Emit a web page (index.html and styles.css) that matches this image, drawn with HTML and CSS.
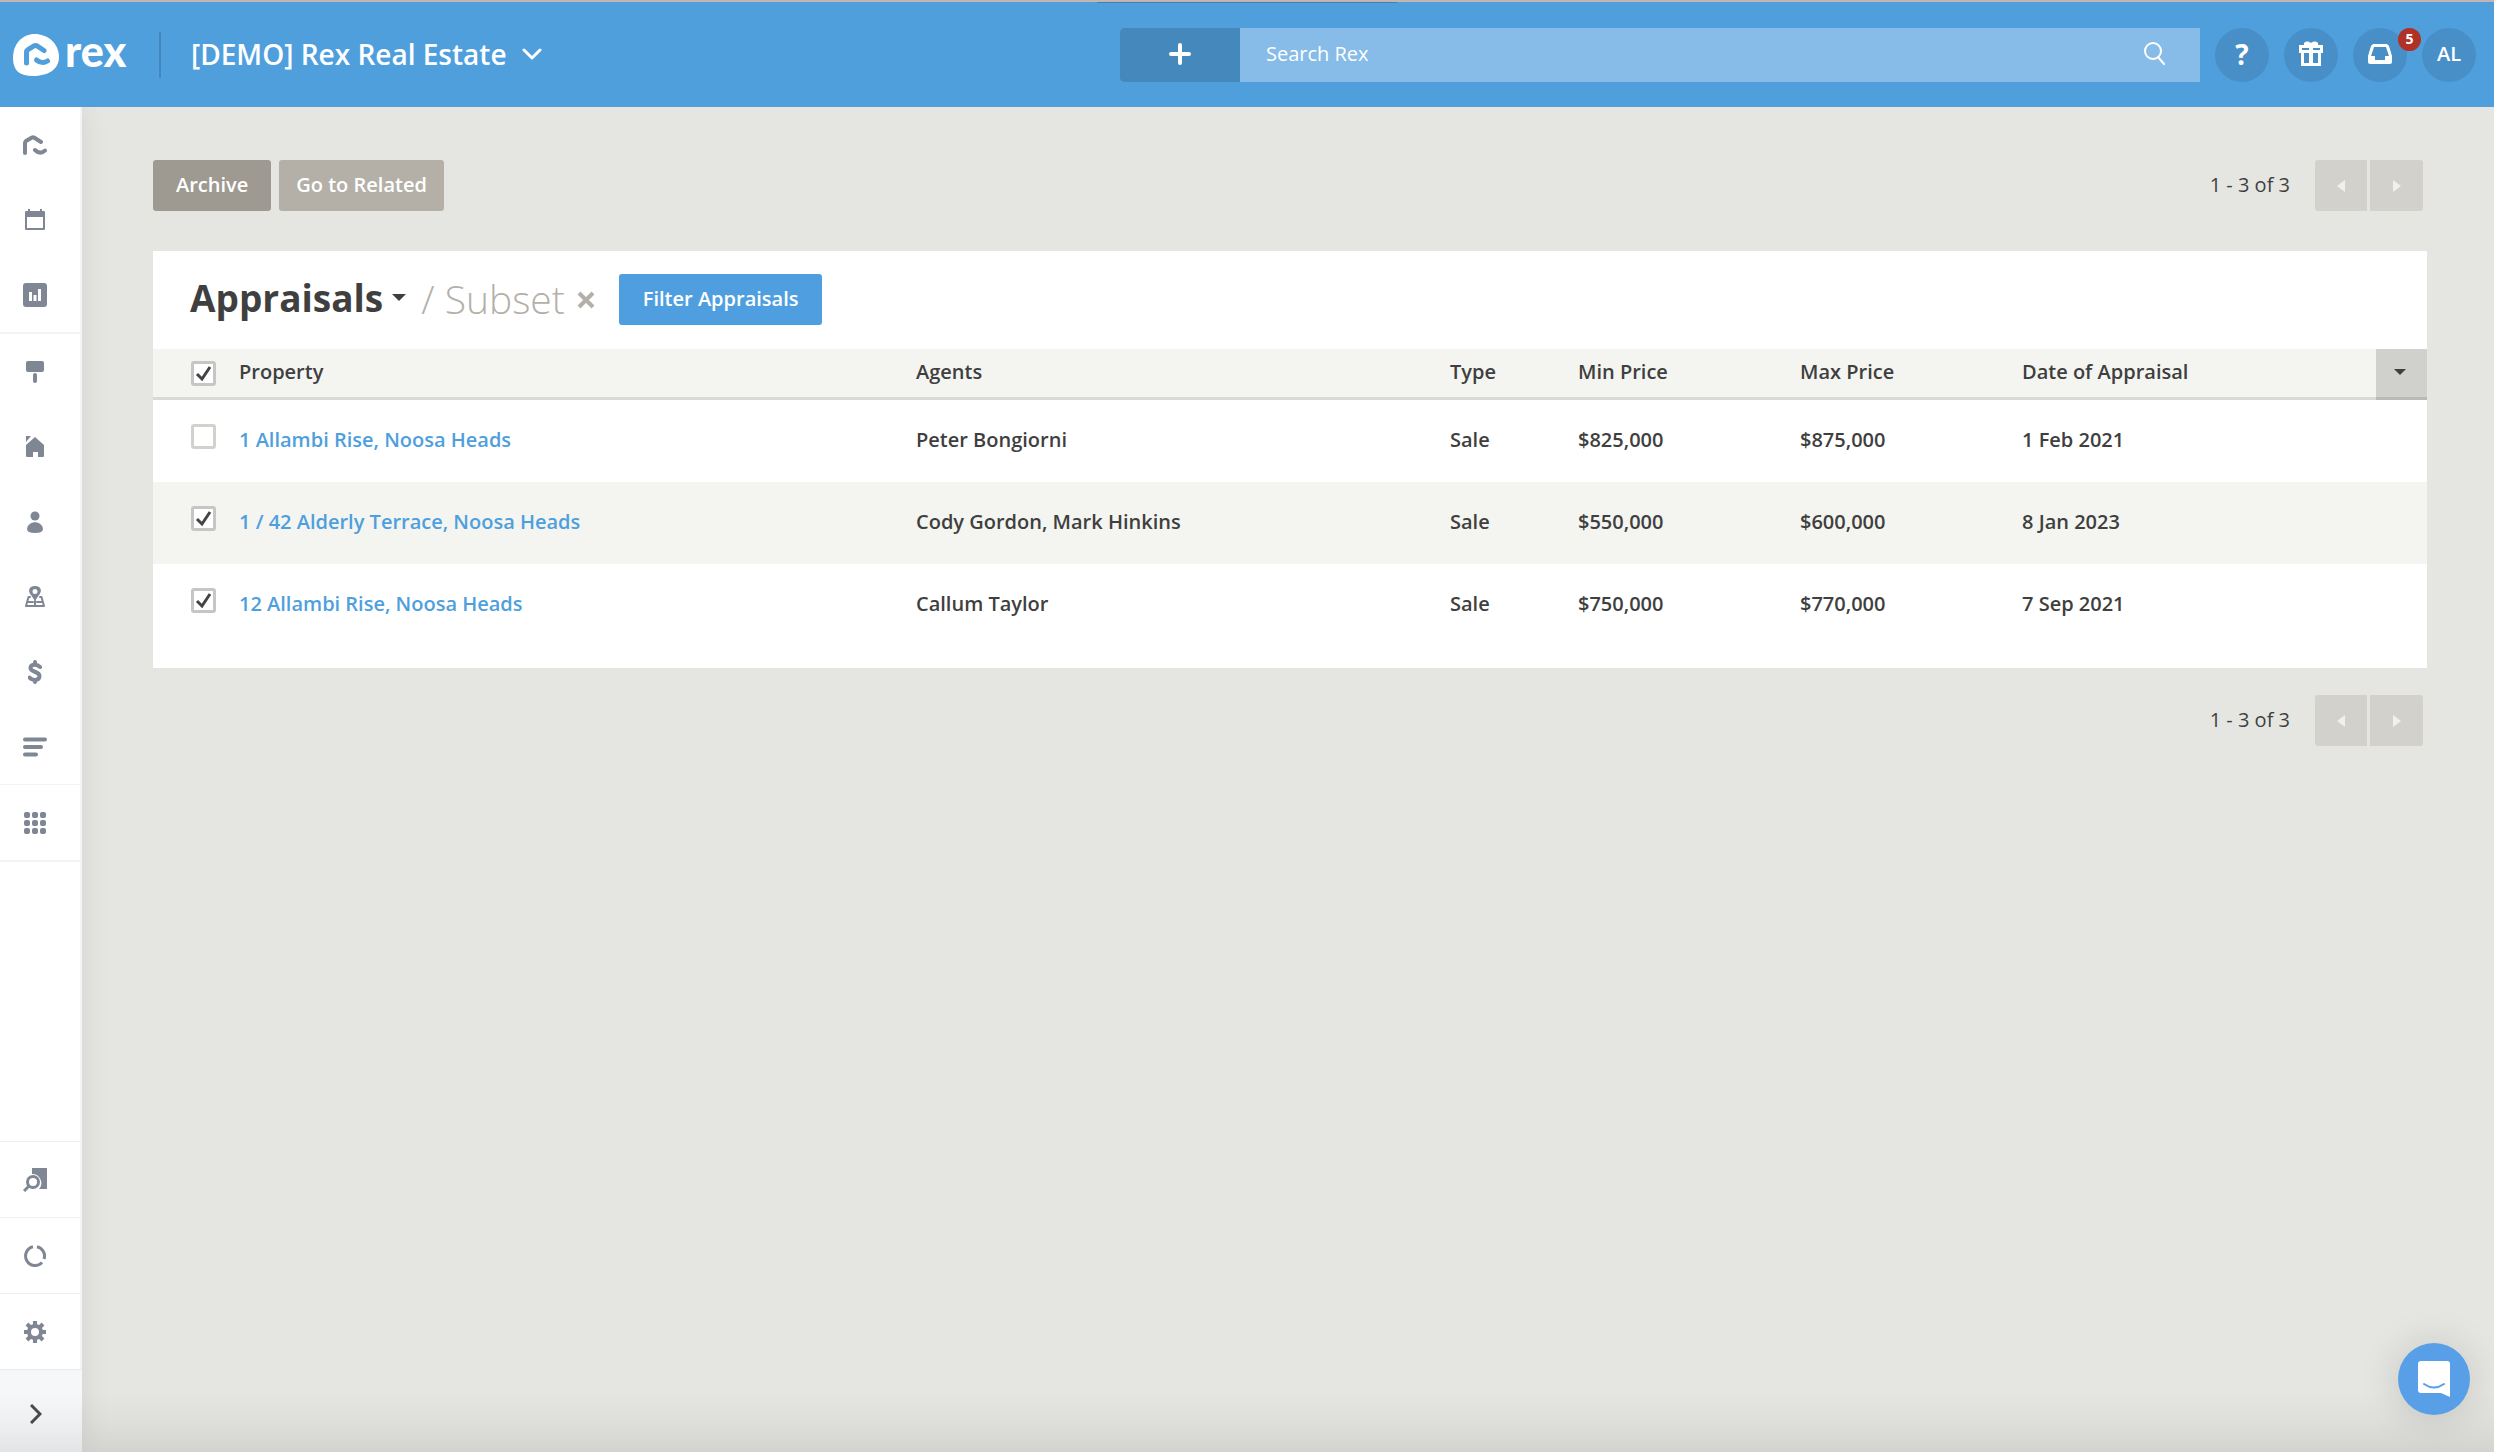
FILE: index.html
```
<!DOCTYPE html>
<html lang="en">
<head>
  <meta charset="UTF-8">
  <title>Appraisals - Rex</title>
  <link rel="stylesheet" href="styles.css">
</head>
<body>
<!-- Top bar -->
<header class="topbar">
  <div class="loading-bar"></div>
  <a class="logo" href="#" aria-label="Rex home">
    <svg width="46" height="42" viewBox="0 0 46 42">
      <path fill="#fff" d="M22 0C34 0 46 9 46 23c0 13-12 19-26 19C7 42 0 37 0 24 0 10 9 0 22 0z"/>
      <path class="logo-line" d="M13.500 29V18.500Q13.500 16.500 15 15.500L21 11.800Q22.500 11 24 11.800L31 16.500M23.500 26Q29 30.500 34.500 27"/>
    </svg>
    <span>rex</span>
  </a>
  <button class="account" type="button">
    [DEMO] Rex Real Estate
    <svg width="20" height="12" viewBox="0 0 20 12"><path d="M2 2l8 8 8-8"/></svg>
  </button>

  <form class="search">
    <button class="add" type="button" aria-label="Add">
      <svg width="22" height="22" viewBox="0 0 22 22"><path d="M11 2v18M2 11h18"/></svg>
    </button>
    <input type="search" placeholder="Search Rex" aria-label="Search Rex">
    <button class="find" type="submit" aria-label="Search">
      <svg width="22" height="23" viewBox="0 0 22 23"><circle cx="9" cy="9" r="8"/><path d="M14 15l6 7"/></svg>
    </button>
  </form>

  <div class="tools">
    <button class="round help" type="button">?</button>
    <button class="round" type="button" aria-label="What's new">
      <svg width="26" height="26" viewBox="0 0 26 26">
        <path fill="#fff" fill-rule="evenodd" d="M1 4h5C5 1 9-1 13 2c4-3 8-1 7 2h5v8h-2v13H3V12H1zM4 7v2h7V7zm11 0v2h7V7zM6 12v3h5v-3zm9 0v3h5v-3zM6 15v7h5v-7zm9 0v7h5v-7z"/>
      </svg>
    </button>
    <button class="round" type="button" aria-label="Inbox, 5 unread">
      <svg width="24" height="20" viewBox="0 0 24 20">
        <path fill="#fff" fill-rule="evenodd" d="M5 0h14l2 2 3 10v6q0 2-2 2H2q-2 0-2-2v-6L3 2zm1 3L3 12h4v4h10v-4h4l-3-9z"/>
      </svg>
      <span class="badge">5</span>
    </button>
    <button class="round" type="button">AL</button>
  </div>
</header>

<div class="page">
  <!-- Side navigation -->
  <nav class="sidebar">
    <div class="nav-group">
      <a href="#" aria-label="Home"><svg width="24" height="20" viewBox="0 0 24 20"><path class="line" d="M2 18V8q0-1 1-2l6-3.500q1-.5 2 0L18 7M12 15q5 5 10 .5"/></svg></a>
      <a href="#" aria-label="Calendar"><svg width="22" height="22" viewBox="0 0 22 22"><path fill-rule="evenodd" d="M4 0h2v2h10V0h2v2h2q1 0 1 1v17q0 1-1 1H2q-1 0-1-1V3q0-1 1-1h2zM3 8v11h16V8z"/></svg></a>
      <a href="#" aria-label="Reports"><svg width="24" height="24" viewBox="0 0 24 24"><path fill-rule="evenodd" d="M3 0h18q3 0 3 3v18q0 3-3 3H3q-3 0-3-3V3q0-3 3-3zM6 9v9h3V9zm4.500 3v6h3v-6zM15 6v12h3V6z"/></svg></a>
    </div>
    <div class="nav-group nav-records">
      <a href="#" aria-label="Listings"><svg width="18" height="22" viewBox="0 0 18 22"><rect width="18" height="11" rx="2"/><rect x="7" y="12" width="4" height="10" rx="2"/></svg></a>
      <a href="#" aria-label="Properties"><svg width="20" height="22" viewBox="0 0 20 22"><path d="M1 0h5L1 6zM10 1l9 8v11q0 1-1 1h-5v-5H8v5H2q-1 0-1-1V9z"/></svg></a>
      <a href="#" aria-label="Contacts"><svg width="18" height="22" viewBox="0 0 18 22"><circle cx="9" cy="5" r="4.500"/><path d="M1 18C2 9 16 9 17 18q0 4-8 4t-8-4z"/></svg></a>
      <a href="#" aria-label="Projects"><svg width="20" height="22" viewBox="0 0 20 22"><path fill-rule="evenodd" d="M10 0c7 0 7 6 4 9l-4 6-4-6C3 6 3 0 10 0zm0 3a2 2 0 1 0 0 5 2 2 0 0 0 0-5z"/><path class="thin" d="M5 11H3.500L1 20h18l-2.500-9H15M2.500 16H8m4 0h5.500M10 15v5"/></svg></a>
      <a href="#" aria-label="Sales"><svg width="14" height="24" viewBox="0 0 14 24"><path class="line" d="M12 7C9 3.500 2.500 4 2.500 8c0 4.500 9 3 9 8 0 5-7 5-10 1.500M7 2v2M7 20v2"/></svg></a>
      <a href="#" aria-label="Lists"><svg width="24" height="20" viewBox="0 0 24 20"><path class="line" d="M2 2.500h20M2 10h16M2 17.500h11"/></svg></a>
    </div>
    <div class="nav-group">
      <a href="#" aria-label="Apps"><svg width="22" height="22" viewBox="0 0 22 22"><rect x="0" y="0" width="6" height="6" rx="2"/><rect x="8" y="0" width="6" height="6" rx="2"/><rect x="16" y="0" width="6" height="6" rx="2"/><rect x="0" y="8" width="6" height="6" rx="2"/><rect x="8" y="8" width="6" height="6" rx="2"/><rect x="16" y="8" width="6" height="6" rx="2"/><rect x="0" y="16" width="6" height="6" rx="2"/><rect x="8" y="16" width="6" height="6" rx="2"/><rect x="16" y="16" width="6" height="6" rx="2"/></svg></a>
    </div>
    <div class="nav-bottom">
      <a href="#" aria-label="Match"><svg width="24" height="24" viewBox="0 0 24 24"><path d="M9 0h15v21h-8a9 9 0 0 0-7-15z"/><circle class="ring" cx="10" cy="14" r="5.500"/><path class="ring" d="M6 18l-5 5"/></svg></a>
      <a href="#" aria-label="Activity"><svg width="22" height="22" viewBox="0 0 22 22"><path class="ring" d="M9 1.700A9.500 9.500 0 1 0 18 17.500M13 1.700A9.500 9.500 0 0 1 20 14"/></svg></a>
      <a href="#" aria-label="Settings"><svg width="22" height="22" viewBox="-11 -11 22 22"><circle class="teeth" r="6"/><path class="teeth" d="M0-7v-4M0 7v4M7 0h4M-7 0h-4M5 5l3 3M-5-5l-3-3M5-5l3-3M-5 5l-3 3"/></svg></a>
      <button class="expand" type="button" aria-label="Expand menu"><svg width="12" height="20" viewBox="0 0 12 20"><path d="M1 1l9 9-9 9"/></svg></button>
    </div>
  </nav>

  <main class="content">
    <div class="actions">
      <button class="btn btn-dark" type="button">Archive</button>
      <button class="btn btn-light" type="button">Go to Related</button>
      <div class="pager">
        <span>1 - 3 of 3</span>
        <button type="button" aria-label="Previous page" disabled><svg width="8" height="12" viewBox="0 0 8 12"><path d="M8 0v12L0 6z"/></svg></button>
        <button type="button" aria-label="Next page" disabled><svg width="8" height="12" viewBox="0 0 8 12"><path d="M0 0v12l8-6z"/></svg></button>
      </div>
    </div>

    <section class="panel">
      <div class="panel-head">
        <h1>Appraisals</h1>
        <button class="caret" type="button" aria-label="Change view"><svg width="14" height="7" viewBox="0 0 14 7"><path d="M0 0h14L7 7z"/></svg></button>
        <span class="subset">/ Subset</span>
        <button class="clear" type="button" aria-label="Clear subset"><svg width="18" height="18" viewBox="0 0 18 18"><path d="M2 2l14 14M16 2L2 16"/></svg></button>
        <button class="btn btn-blue" type="button">Filter Appraisals</button>
      </div>

      <table>
        <colgroup>
          <col class="col-check"><col class="col-property"><col class="col-agents"><col class="col-type"><col class="col-price"><col class="col-price"><col><col class="col-menu">
        </colgroup>
        <thead>
          <tr>
            <th><input type="checkbox" aria-label="Select all" checked></th>
            <th>Property</th>
            <th>Agents</th>
            <th>Type</th>
            <th>Min Price</th>
            <th>Max Price</th>
            <th>Date of Appraisal</th>
            <th class="menu"><button type="button" aria-label="Choose columns"><svg width="12" height="6" viewBox="0 0 12 6"><path d="M0 0h12L6 6z"/></svg></button></th>
          </tr>
        </thead>
        <tbody>
          <tr>
            <td><input type="checkbox" aria-label="Select 1 Allambi Rise"></td>
            <td><a href="#">1 Allambi Rise, Noosa Heads</a></td>
            <td>Peter Bongiorni</td>
            <td>Sale</td>
            <td>$825,000</td>
            <td>$875,000</td>
            <td colspan="2">1 Feb 2021</td>
          </tr>
          <tr>
            <td><input type="checkbox" aria-label="Select 1 / 42 Alderly Terrace" checked></td>
            <td><a href="#">1 / 42 Alderly Terrace, Noosa Heads</a></td>
            <td>Cody Gordon, Mark Hinkins</td>
            <td>Sale</td>
            <td>$550,000</td>
            <td>$600,000</td>
            <td colspan="2">8 Jan 2023</td>
          </tr>
          <tr>
            <td><input type="checkbox" aria-label="Select 12 Allambi Rise" checked></td>
            <td><a href="#">12 Allambi Rise, Noosa Heads</a></td>
            <td>Callum Taylor</td>
            <td>Sale</td>
            <td>$750,000</td>
            <td>$770,000</td>
            <td colspan="2">7 Sep 2021</td>
          </tr>
        </tbody>
      </table>
    </section>

    <div class="actions actions-bottom">
      <div class="pager">
        <span>1 - 3 of 3</span>
        <button type="button" aria-label="Previous page" disabled><svg width="8" height="12" viewBox="0 0 8 12"><path d="M8 0v12L0 6z"/></svg></button>
        <button type="button" aria-label="Next page" disabled><svg width="8" height="12" viewBox="0 0 8 12"><path d="M0 0v12l8-6z"/></svg></button>
      </div>
    </div>
  </main>
</div>

<!-- Chat launcher -->
<button class="chat" type="button" aria-label="Open chat">
  <svg width="32" height="36" viewBox="0 0 32 36">
    <path fill="#fff" d="M3 0h26q3 0 3 3v33l-9-4H3q-3 0-3-3V3q0-3 3-3z"/>
    <path class="smile" d="M6 23q10 7 20 0"/>
  </svg>
</button>
</body>
</html>
```
FILE: styles.css
```
* {
  box-sizing: border-box;
}

body {
  margin: 0;
  min-height: 100vh;
  display: flex;
  flex-direction: column;
  background: #e5e6e1;
  color: #3f3f3f;
  font-family: "Open Sans", "Noto Sans", sans-serif;
  font-size: 20px;
  line-height: 26px;
}

button {
  border: 0;
  padding: 0;
  margin: 0;
  background: none;
  color: inherit;
  font: inherit;
  display: flex;
  align-items: center;
  justify-content: center;
}

svg {
  display: block;
}

/* Top bar */
.topbar {
  position: relative;
  height: 107px;
  padding: 0 18px 0 13px;
  border-top: 2px solid #c3b3b1;
  background: #4f9fdd;
  color: #fff;
  display: flex;
  align-items: center;
}

.loading-bar {
  position: absolute;
  top: 0;
  left: 44%;
  width: 12%;
  height: 1px;
  background: #3f7fb1;
}

.logo {
  display: flex;
  align-items: center;
  gap: 6px;
  height: 46px;
  width: 148px;
  border-right: 2px solid #4387bd;
  color: #fff;
  font-family: Lato, sans-serif;
  font-size: 43px;
  font-weight: 900;
  line-height: 44px;
  text-decoration: none;
}

.logo span {
  padding-bottom: 8px;
}

.logo-line {
  fill: none;
  stroke: #4f9fdd;
  stroke-width: 5;
  stroke-linecap: round;
}

.account {
  gap: 15px;
  margin-left: 30px;
  padding-bottom: 2px;
  font-size: 28px;
  font-weight: 600;
}

.account svg,
.add svg,
.find svg {
  fill: none;
  stroke: #fff;
  stroke-width: 3;
  stroke-linecap: round;
  stroke-linejoin: round;
}

.search {
  display: flex;
  width: 1080px;
  height: 54px;
  margin-left: auto;
  background: #86bce7;
  border-radius: 4px 0 0 4px;
}

.add {
  width: 120px;
  padding-bottom: 2px;
  border-radius: 4px 0 0 4px;
  background: #4488bc;
}

.add svg {
  stroke-width: 4;
}

.search input {
  flex: 1;
  border: 0;
  padding: 0 26px 2px;
  background: none;
  color: #fff;
  font: inherit;
}

.search input::placeholder {
  color: #fff;
  opacity: 1;
}

.find {
  width: 90px;
  padding-bottom: 2px;
}

.find svg {
  stroke-width: 2;
}

.tools {
  display: flex;
  gap: 15px;
  margin-left: 15px;
}

.round {
  position: relative;
  width: 54px;
  height: 54px;
  padding-bottom: 2px;
  border-radius: 50%;
  background: #488fc8;
  font-weight: 600;
}

.help {
  font-size: 28px;
  font-weight: 700;
}

.badge {
  position: absolute;
  top: 0;
  right: -14px;
  width: 23px;
  height: 23px;
  border-radius: 50%;
  background: #b03126;
  font-size: 14px;
  font-weight: 700;
  line-height: 22px;
}

/* Page body */
.page {
  position: relative;
  flex: 1;
  display: flex;
}

/* Fade along the bottom edge of the window */
.page::after {
  content: "";
  position: absolute;
  left: 0;
  right: 0;
  bottom: 0;
  height: 60px;
  background: linear-gradient(to top, rgba(0, 0, 0, 0.08), rgba(0, 0, 0, 0.03) 50%, rgba(0, 0, 0, 0));
  pointer-events: none;
}

.sidebar {
  width: 82px;
  border-right: 2px solid #f2f3f4;
  background: #fff;
  box-shadow: 0 0 30px rgba(0, 0, 0, 0.08);
  clip-path: inset(0 -40px 0 0);
  display: flex;
  flex-direction: column;
}

.sidebar a {
  height: 75px;
  padding-right: 10px;
  display: flex;
  align-items: center;
  justify-content: center;
}

.sidebar svg {
  fill: #7f8694;
}

.nav-group {
  border-bottom: 2px solid #f2f3f4;
}

.nav-records {
  border-bottom-width: 1px;
}

.line,
.ring,
.thin,
.teeth {
  fill: none;
  stroke: #7f8694;
  stroke-width: 4;
  stroke-linecap: round;
  stroke-linejoin: round;
}

.ring {
  stroke-width: 3;
  stroke-linecap: butt;
}

.thin {
  stroke-width: 2;
}

.teeth {
  stroke-linecap: butt;
}

.nav-bottom {
  margin-top: auto;
}

.nav-bottom a {
  height: 76px;
  border-top: 1px solid #eeeff1;
}

.expand {
  width: 82px;
  height: 83px;
  padding: 6px 10px 0 0;
  border-top: 1px solid #e8eaec;
  background: #f6f7f9;
}

.expand svg {
  fill: none;
  stroke: #4a4a4a;
  stroke-width: 3;
}

.content {
  flex: 1;
  padding: 53px 67px 0 71px;
}

.actions {
  display: flex;
  gap: 8px;
  padding-right: 4px;
}

.actions-bottom {
  margin-top: 27px;
}

.btn {
  height: 51px;
  padding: 0 23px 2px;
  border-radius: 3px;
  color: #fff;
  font-weight: 600;
}

.btn-dark {
  background: #9e9a92;
}

.btn-light {
  padding: 0 17px 2px;
  background: #b4b0a8;
}

.btn-blue {
  margin-left: 24px;
  padding: 0 24px 2px;
  background: #4f9fe0;
}

.pager {
  display: flex;
  align-items: center;
  gap: 3px;
  margin-left: auto;
}

.pager span {
  margin-right: 22px;
  padding-bottom: 2px;
}

.pager button {
  width: 52px;
  height: 51px;
  border-radius: 3px 0 0 3px;
  background: #d2d1cc;
}

.pager button:last-child {
  width: 53px;
  border-radius: 0 3px 3px 0;
}

.pager svg {
  fill: #f0f0ee;
}

/* Appraisals list */
.panel {
  margin-top: 40px;
  padding-bottom: 22px;
  background: #fff;
}

.panel-head {
  display: flex;
  align-items: center;
  height: 98px;
  padding: 0 0 1px 37px;
}

h1 {
  margin: 0;
  padding-bottom: 4px;
  font-size: 37px;
  font-weight: 700;
  line-height: 44px;
}

.caret {
  margin-left: 9px;
  padding-bottom: 4px;
}

.caret svg,
.menu svg {
  fill: #3f3f3f;
}

.subset {
  margin-left: 15px;
  padding-bottom: 2px;
  color: #b4b0a8;
  font-size: 39px;
  font-weight: 300;
}

.clear {
  margin-left: 12px;
}

.clear svg {
  stroke: #b4b0a8;
  stroke-width: 4;
}

table {
  width: 100%;
  border-spacing: 0;
  table-layout: fixed;
}

.col-check { width: 86px; }
.col-property { width: 677px; }
.col-agents { width: 534px; }
.col-type { width: 128px; }
.col-price { width: 222px; }
.col-menu { width: 51px; }

th,
td {
  padding: 0 0 3px;
  text-align: left;
  font-weight: 600;
}

th {
  height: 51px;
  padding-bottom: 2px;
  border-bottom: 3px solid #d9dad5;
  background: #f4f5f1;
}

td {
  height: 82px;
}

tbody tr:nth-child(even) {
  background: #f4f5f1;
}

td a {
  color: #4f9fdd;
  text-decoration: none;
}

.menu {
  background: #d0d1cc;
  border-bottom-color: #b9bab6;
}

.menu button {
  width: 47px;
  height: 46px;
}

input[type="checkbox"] {
  appearance: none;
  display: block;
  width: 25px;
  height: 25px;
  margin: 2px 0 0 38px;
  border: 3px solid #d2d2cd;
  border-radius: 3px;
  background: #fff;
}

td input[type="checkbox"] {
  margin: 0 0 6px 38px;
}

input[type="checkbox"]:checked {
  border-color: #c6c6c4;
  background: #fff url("data:image/svg+xml,%3Csvg xmlns='http://www.w3.org/2000/svg' viewBox='0 0 19 19'%3E%3Cpath d='M3 10l5 5L16 3' fill='none' stroke='%23444' stroke-width='3'/%3E%3C/svg%3E") center / 19px 19px;
}

/* Chat launcher */
.chat {
  position: fixed;
  right: 24px;
  bottom: 37px;
  width: 72px;
  height: 72px;
  border-radius: 50%;
  background: #589fe8;
  box-shadow: 0 2px 40px rgba(0, 0, 0, 0.15);
}

.smile {
  fill: none;
  stroke: #589fe8;
  stroke-width: 2;
  stroke-linecap: round;
}
```
